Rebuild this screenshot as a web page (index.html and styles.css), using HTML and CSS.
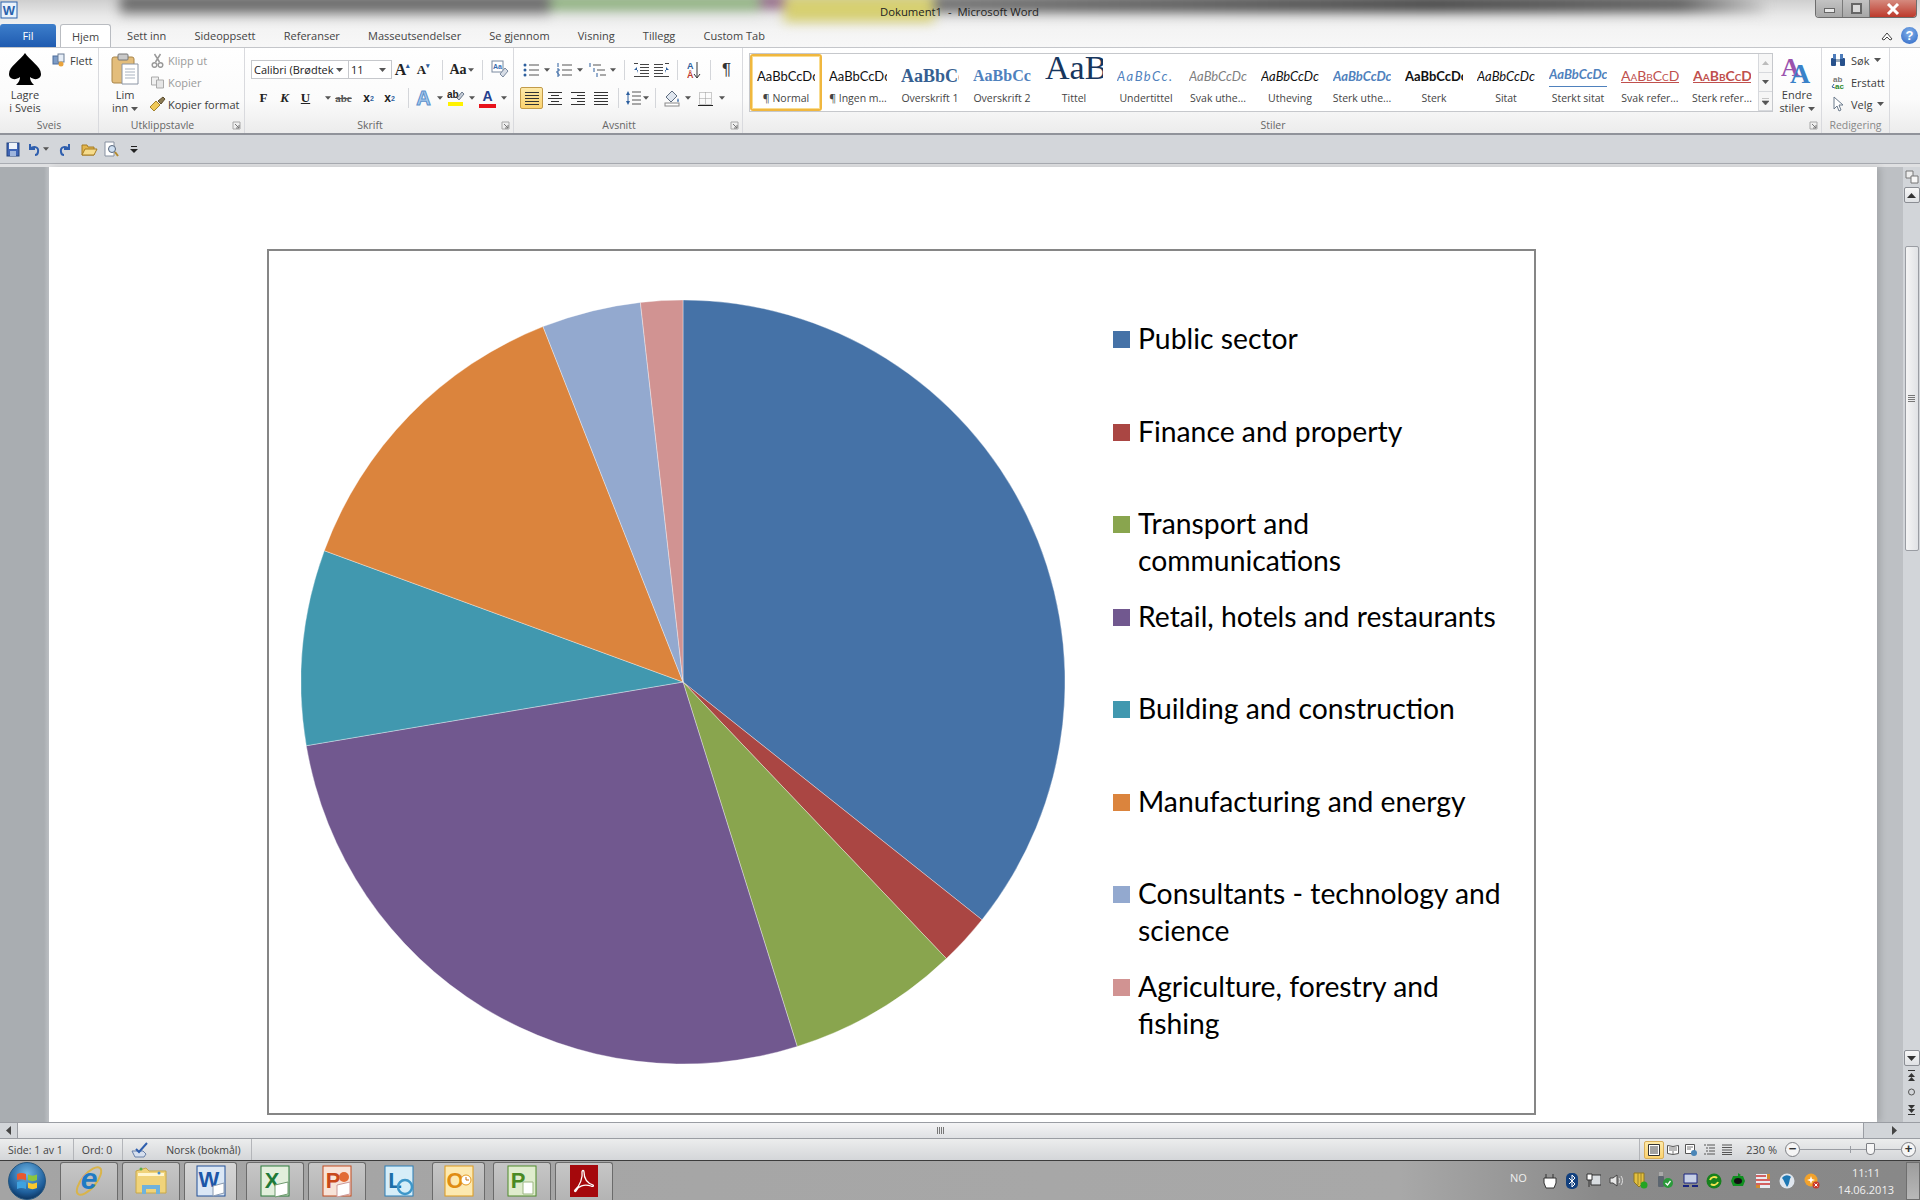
FILE: index.html
```html
<!DOCTYPE html>
<html lang="nb">
  <head>
    <meta charset="UTF-8" />
    <title>Dokument1 - Microsoft Word</title>
    <link rel="stylesheet" href="styles.css">
  </head>
  <body>
    <svg class="defs" width="0" height="0">
      <symbol id="arrow" viewBox="0 0 7 4"><path d="M0 0h7L3.500 4z" fill="#555"/></symbol>
      <symbol id="launcher" viewBox="0 0 9 9"><path d="M1 1h7v7H1z" fill="none" stroke="#a8a8a8"/><path d="M3 3l4 4M7 4v3H4" fill="none" stroke="#777"/></symbol>
      <symbol id="lines" viewBox="0 0 16 14"><path d="M1 1.500h14M1 4.500h14M1 7.500h14M1 10.500h14M1 13.500h14" stroke="#333" fill="none"/></symbol>
    </svg>

    <!-- title bar and tabs -->
    <header class="top">
      <div class="blur">
        <span class="blur-dark"></span>
        <span class="blur-green"></span>
        <span class="blur-purple"></span>
        <span class="blur-yellow"></span>
        <span class="blur-dark2"></span>
      </div>
      <div class="titlebar">
        <svg class="app-icon" width="18" height="18" viewBox="0 0 18 18">
          <rect x="1" y="1" width="16" height="16" fill="#eaf2fb" stroke="#2a62ad"/>
          <text x="9" y="14" text-anchor="middle" class="app-w">W</text>
        </svg>
        <span class="doc-title">Dokument1 &nbsp;-&nbsp; Microsoft Word</span>
        <div class="win-btns">
          <span class="win-btn"><i class="win-min"></i></span>
          <span class="win-btn"><i class="win-max"></i></span>
          <span class="win-btn win-close">
            <svg width="14" height="12" viewBox="0 0 14 12"><path d="M2 1l10 10M12 1L2 11" stroke="#fff" stroke-width="3"/></svg>
          </span>
        </div>
      </div>
      <nav class="tabs">
        <span class="tab-file">Fil</span>
        <span class="tab tab-on">Hjem</span>
        <span class="tab">Sett inn</span>
        <span class="tab">Sideoppsett</span>
        <span class="tab">Referanser</span>
        <span class="tab">Masseutsendelser</span>
        <span class="tab">Se gjennom</span>
        <span class="tab">Visning</span>
        <span class="tab">Tillegg</span>
        <span class="tab">Custom Tab</span>
        <span class="tab-right">
          <svg width="12" height="10" viewBox="0 0 12 10"><path d="M1 8l5-6 5 6-2 1-3-3-3 3z" fill="#fff" stroke="#444"/></svg>
          <span class="help">?</span>
        </span>
      </nav>
    </header>

    <!-- ribbon -->
    <section class="ribbon">
      <div class="group g-sveis">
        <div class="g-body sveis">
          <div class="big">
            <svg width="34" height="32" viewBox="0 0 34 32"><path d="M17 0C21 7 33 13 33 21c0 5-6 7-11 3 0 3 1 5 4 8H8c3-3 4-5 4-8-5 4-11 2-11-3C1 13 13 7 17 0z" fill="#000"/></svg>
            <span class="big-label">Lagre<br>i Sveis</span>
          </div>
          <div class="small-item flett">
            <svg width="13" height="14" viewBox="0 0 13 14"><rect x="1" y="3" width="6" height="8" fill="#7d9cc7" stroke="#4c6c9c"/><rect x="6" y="1" width="6" height="8" fill="#e6edf6" stroke="#6b7d95"/><circle cx="9" cy="11" r="2.500" fill="#e9a33c"/></svg>
            Flett
          </div>
        </div>
        <div class="g-label">Sveis</div>
      </div>

      <div class="group g-clip">
        <div class="g-body clip">
          <div class="big">
            <svg width="28" height="32" viewBox="0 0 28 32">
              <rect x="1" y="4" width="22" height="26" rx="2" fill="#e3bd7b" stroke="#a98549"/>
              <rect x="7" y="1" width="10" height="6" rx="1" fill="#c9c9c9" stroke="#777"/>
              <path d="M11 11h16v20H11z" fill="#fff" stroke="#8a94a3"/>
              <path d="M14 16h10M14 19h10M14 22h10M14 25h10" stroke="#a9b3c0"/>
            </svg>
            <span class="big-label">Lim<br>inn <svg class="ar-in" width="7" height="4"><use href="#arrow"/></svg></span>
          </div>
          <div class="clip-list">
            <div class="small-item off">
              <svg width="17" height="15" viewBox="0 0 14 15"><path d="M4 1l5 8M10 1L5 9" stroke="#9a9a9a" stroke-width="1.500"/><circle cx="4" cy="12" r="2.300" fill="none" stroke="#9a9a9a" stroke-width="1.500"/><circle cx="10" cy="12" r="2.300" fill="none" stroke="#9a9a9a" stroke-width="1.500"/></svg>
              Klipp ut
            </div>
            <div class="small-item off">
              <svg width="17" height="13" viewBox="0 0 14 13"><path d="M1 1h7v8H1z" fill="#f0f0f0" stroke="#aaa"/><path d="M6 4h7v8H6z" fill="#e6e6e6" stroke="#aaa"/></svg>
              Kopier
            </div>
            <div class="small-item">
              <svg width="17" height="16" viewBox="0 0 17 16"><path d="M1 11l6-6 4 4-6 6z" fill="#efc95a" stroke="#a5842c"/><path d="M9 5l5-4 2 2-4 5z" fill="#8c7b54" stroke="#5c4d2f"/></svg>
              Kopier format
            </div>
          </div>
        </div>
        <div class="g-label g-label-launch">Utklippstavle<svg class="launch" width="9" height="9"><use href="#launcher"/></svg></div>
      </div>

      <div class="group g-font">
        <div class="g-body rows">
          <div class="row">
            <span class="sel sel-font">Calibri (Brødtek<svg width="7" height="4"><use href="#arrow"/></svg></span>
            <span class="sel sel-size">11<svg width="7" height="4"><use href="#arrow"/></svg></span>
            <span class="t t-grow">A<sup>▴</sup></span>
            <span class="t t-shrink">A<sup>▾</sup></span>
            <span class="sep sep-8"></span>
            <span class="t t-case">Aa</span><span class="ar ar-back"><svg width="6" height="4"><use href="#arrow"/></svg></span>
            <span class="sep sep-7"></span>
            <span class="t">
              <svg width="18" height="19" viewBox="0 0 18 19"><rect x="1" y="1" width="11" height="11" fill="#fff" stroke="#7b8aa0"/><text x="6.500" y="9" class="mini-a">Aa</text><path d="M9 14l5-6 3 3-5 6z" fill="#d7dde6" stroke="#7b8aa0"/></svg>
            </span>
          </div>
          <div class="row row-shift">
            <span class="t t-b">F</span>
            <span class="t t-i">K</span>
            <span class="t t-u">U</span><span class="ar ar-wide"><svg width="6" height="4"><use href="#arrow"/></svg></span>
            <span class="t t-s">abc</span>
            <span class="t t-sub sp4">x<sub>2</sub></span>
            <span class="t t-sub">x<sup>2</sup></span>
            <span class="sep sep-8"></span>
            <span class="t t-effect">A</span><span class="ar"><svg width="6" height="4"><use href="#arrow"/></svg></span>
            <span class="t">
              <svg width="18" height="18" viewBox="0 0 18 18"><text x="0" y="9" class="mini-ab">ab</text><path d="M10 9l5-6 2 2-5 6z" fill="#c5cdd8" stroke="#6d7a8c"/><rect x="1" y="13" width="15" height="4" fill="#fff200"/></svg>
            </span><span class="ar"><svg width="6" height="4"><use href="#arrow"/></svg></span>
            <span class="t t-color">A<i></i></span><span class="ar"><svg width="6" height="4"><use href="#arrow"/></svg></span>
          </div>
        </div>
        <div class="g-label g-label-launch">Skrift<svg class="launch" width="9" height="9"><use href="#launcher"/></svg></div>
      </div>

      <div class="group g-para">
        <div class="g-body rows">
          <div class="row para-top">
            <span class="t">
              <svg width="16" height="14" viewBox="0 0 16 14"><path d="M6 2h10M6 7h10M6 12h10" stroke="#555"/><circle cx="2" cy="2" r="1.500" fill="#2d5f9e"/><circle cx="2" cy="7" r="1.500" fill="#2d5f9e"/><circle cx="2" cy="12" r="1.500" fill="#2d5f9e"/></svg>
            </span><span class="ar ar-s"><svg width="6" height="4"><use href="#arrow"/></svg></span>
            <span class="t">
              <svg width="16" height="14" viewBox="0 0 16 14"><path d="M6 2h10M6 7h10M6 12h10" stroke="#555"/><path d="M2 0v4M1 6h2v2H1v2h2M1 11h2v2H1" stroke="#2d5f9e" fill="none"/></svg>
            </span><span class="ar ar-s"><svg width="6" height="4"><use href="#arrow"/></svg></span>
            <span class="t">
              <svg width="18" height="14" viewBox="0 0 18 14"><path d="M5 2h8M9 7h8M12 12h6" stroke="#555"/><path d="M2 0v4M6 5v4M9 10v4" stroke="#2d5f9e"/></svg>
            </span><span class="ar ar-s"><svg width="6" height="4"><use href="#arrow"/></svg></span>
            <span class="sep sep-5"></span>
            <span class="t">
              <svg width="16" height="14" viewBox="0 0 16 14"><path d="M7 1.500h9M7 4.500h9M7 7.500h9M7 10.500h9M1 13.500h15M1 .5h4" stroke="#444"/><path d="M5 7H1l3-3v6z" fill="#2d5f9e"/></svg>
            </span>
            <span class="t">
              <svg width="16" height="14" viewBox="0 0 16 14"><path d="M0 1.500h9M0 4.500h9M0 7.500h9M0 10.500h9M0 13.500h15M11 .5h4" stroke="#444"/><path d="M11 7h4l-3-3v6z" fill="#2d5f9e"/></svg>
            </span>
            <span class="sep sep-5"></span>
            <span class="t">
              <svg width="14" height="18" viewBox="0 0 14 18"><text x="0" y="8" class="mini-sort a">A</text><text x="0" y="17" class="mini-sort z">Å</text><path d="M10 1v15M7 13l3 4 3-4" fill="none" stroke="#333"/></svg>
            </span>
            <span class="sep sep-6"></span>
            <span class="t t-pil">¶</span>
          </div>
          <div class="row">
            <span class="t t-active">
              <svg width="16" height="14"><use href="#lines"/></svg>
            </span>
            <span class="t t-narrow"><svg width="16" height="14" viewBox="0 0 16 14"><path d="M1 1.500h14M4 4.500h8M1 7.500h14M4 10.500h8M1 13.500h14" stroke="#333"/></svg></span>
            <span class="t t-narrow"><svg width="16" height="14" viewBox="0 0 16 14"><path d="M1 1.500h14M7 4.500h8M1 7.500h14M7 10.500h8M1 13.500h14" stroke="#333"/></svg></span>
            <span class="t t-narrow"><svg width="16" height="14"><use href="#lines"/></svg></span>
            <span class="sep sep-6"></span>
            <span class="t t-spacing">
              <svg width="16" height="16" viewBox="0 0 16 16"><path d="M7 2h9M7 6h9M7 10h9M7 14h9" stroke="#555"/><path d="M3 1L1 5h4zM3 15l-2-4h4z" fill="#2d5f9e"/><path d="M3 4v8" stroke="#2d5f9e"/></svg>
            </span><span class="ar ar-n"><svg width="6" height="4"><use href="#arrow"/></svg></span>
            <span class="sep sep-5"></span>
            <span class="t">
              <svg width="16" height="18" viewBox="0 0 16 18"><path d="M2 8l6-6 5 5-6 6z" fill="#dfe6ef" stroke="#5f6d80"/><path d="M14 9c1 2 1 4 0 4s-1-2 0-4z" fill="#2d5f9e"/><rect x="1" y="14" width="14" height="3" fill="#fff" stroke="#888"/></svg>
            </span><span class="ar"><svg width="6" height="4"><use href="#arrow"/></svg></span>
            <span class="t sp2">
              <svg width="15" height="15" viewBox="0 0 15 15"><path d="M1.500 1.500h12v12h-12zM7.500 1.500v12M1.500 7.500h12" fill="none" stroke="#999" stroke-dasharray="1 1"/><path d="M0 14.500h15" stroke="#222"/></svg>
            </span><span class="ar"><svg width="6" height="4"><use href="#arrow"/></svg></span>
          </div>
        </div>
        <div class="g-label g-label-launch">Avsnitt<svg class="launch" width="9" height="9"><use href="#launcher"/></svg></div>
      </div>

      <div class="group g-styles">
        <div class="g-body styles-body">
          <div class="gallery">
            <div class="style style-on"><span class="pv">AaBbCcDc</span><span class="st-name">¶ Normal</span></div>
            <div class="style"><span class="pv">AaBbCcDc</span><span class="st-name">¶ Ingen m...</span></div>
            <div class="style"><span class="pv pv-h1">AaBbCc</span><span class="st-name">Overskrift 1</span></div>
            <div class="style"><span class="pv pv-h2">AaBbCc</span><span class="st-name">Overskrift 2</span></div>
            <div class="style"><span class="pv pv-title">AaB</span><span class="st-name">Tittel</span></div>
            <div class="style"><span class="pv pv-sub">AaBbCc.</span><span class="st-name">Undertittel</span></div>
            <div class="style"><span class="pv pv-weak">AaBbCcDc</span><span class="st-name">Svak uthe...</span></div>
            <div class="style"><span class="pv pv-em">AaBbCcDc</span><span class="st-name">Utheving</span></div>
            <div class="style"><span class="pv pv-strongem">AaBbCcDc</span><span class="st-name">Sterk uthe...</span></div>
            <div class="style"><span class="pv pv-strong">AaBbCcDc</span><span class="st-name">Sterk</span></div>
            <div class="style"><span class="pv pv-em">AaBbCcDc</span><span class="st-name">Sitat</span></div>
            <div class="style"><span class="pv pv-quote">AaBbCcDc</span><span class="st-name">Sterkt sitat</span></div>
            <div class="style"><span class="pv pv-ref">AaBbCcDd</span><span class="st-name">Svak refer...</span></div>
            <div class="style"><span class="pv pv-ref pv-refb">AaBbCcDd</span><span class="st-name">Sterk refer...</span></div>
            <div class="gal-scroll">
              <span><svg width="7" height="4"><path d="M0 4h7L3.500 0z" fill="#bbb"/></svg></span>
              <span><svg width="7" height="4"><use href="#arrow"/></svg></span>
              <span><svg width="7" height="7" viewBox="0 0 7 7"><path d="M0 0h7M0 3h7L3.500 7z" fill="#555" stroke="#555" stroke-width=".6"/></svg></span>
            </div>
          </div>
          <div class="big change">
            <svg width="32" height="32" viewBox="0 0 32 32">
              <text x="0" y="23" class="aa-purple">A</text>
              <text x="9" y="30" class="aa-blue">A</text>
            </svg>
            <span class="big-label">Endre<br>stiler <svg class="ar-in" width="7" height="4"><use href="#arrow"/></svg></span>
          </div>
        </div>
        <div class="g-label g-label-launch">Stiler<svg class="launch" width="9" height="9"><use href="#launcher"/></svg></div>
      </div>

      <div class="group g-edit">
        <div class="g-body edit">
          <div class="small-item">
            <svg width="16" height="14" viewBox="0 0 16 14"><rect x="1" y="5" width="5" height="8" rx="1" fill="#27518c"/><rect x="10" y="5" width="5" height="8" rx="1" fill="#27518c"/><path d="M3 1h3v5H3zM10 1h3v5h-3z" fill="#4d7cbb"/><path d="M6 6h4v3H6z" fill="#9ab"/></svg>
            Søk <svg class="ar-in" width="7" height="4"><use href="#arrow"/></svg>
          </div>
          <div class="small-item">
            <svg width="16" height="15" viewBox="0 0 16 15"><text x="3" y="7" class="mini-rep">ab</text><text x="5" y="14" class="mini-rep2">ac</text><path d="M4 9l-2 3 3 1" fill="none" stroke="#345f9c"/></svg>
            Erstatt
          </div>
          <div class="small-item">
            <svg width="16" height="16" viewBox="0 0 16 16"><path d="M4 1v12l3-3 2 5 2-1-2-5h4z" fill="#fff" stroke="#6b7a8c"/></svg>
            Velg <svg class="ar-in" width="7" height="4"><use href="#arrow"/></svg>
          </div>
        </div>
        <div class="g-label g-label-off">Redigering</div>
      </div>
    </section>

    <!-- quick access -->
    <div class="qat">
      <svg width="14" height="15" viewBox="0 0 14 15"><rect x="1" y="1" width="12" height="13" fill="#3f65b5" stroke="#23437f"/><rect x="3" y="1" width="8" height="6" fill="#eef3fa"/><rect x="4" y="9" width="6" height="5" fill="#9fb5dc"/></svg>
      <svg class="q-undo" width="15" height="15" viewBox="0 0 15 15"><path d="M4 2v5h5M4 7c3-3 9-3 8 3-.3 2-2 3-3 3" fill="none" stroke="#2f5fae" stroke-width="2"/></svg>
      <svg class="q-ar" width="6" height="4"><use href="#arrow"/></svg>
      <svg class="q-redo" width="15" height="15" viewBox="0 0 15 15"><path d="M11 2v5H6M11 7C8 4 2 4 3 10c.3 2 2 3 3 3" fill="none" stroke="#2f5fae" stroke-width="2"/></svg>
      <svg class="q-open" width="17" height="15" viewBox="0 0 17 15"><path d="M1 3h5l1 2h6v8H1z" fill="#e3b64e" stroke="#a67c23"/><path d="M1 13l3-6h12l-3 6z" fill="#f6dc8c" stroke="#a67c23"/></svg>
      <svg class="q-prev" width="15" height="16" viewBox="0 0 15 16"><path d="M1 1h9v14H1z" fill="#fff" stroke="#8791a0"/><circle cx="8" cy="8" r="3.500" fill="#cfe0f2" stroke="#56657a"/><path d="M11 11l3 4" stroke="#b48a2e" stroke-width="2"/></svg>
      <svg class="q-drop" width="8" height="7" viewBox="0 0 8 7"><path d="M1 .5h6" stroke="#222"/><path d="M0 3h8L4 7z" fill="#222"/></svg>
    </div>

    <!-- document -->
    <main class="workspace">
      <div class="page">
        <div class="chart">
          <svg class="pie" width="764" height="764" viewBox="-382 -382 764 764">
            <path class="s" fill="#4572a7" d="M0 0V-382A382 382 0 0 1 299 237.800Z"/>
            <path class="s" fill="#aa4643" d="M0 0L299 237.800A382 382 0 0 1 263.400 276.600Z"/>
            <path class="s" fill="#89a54e" d="M0 0L263.400 276.600A382 382 0 0 1 114.200 364.500Z"/>
            <path class="s" fill="#71588f" d="M0 0L114.200 364.500A382 382 0 0 1 -376.700 63.700Z"/>
            <path class="s" fill="#4198af" d="M0 0L-376.700 63.700A382 382 0 0 1 -358.700 -131.300Z"/>
            <path class="s" fill="#db843d" d="M0 0L-358.700 -131.300A382 382 0 0 1 -140 -355.400Z"/>
            <path class="s" fill="#93a9cf" d="M0 0L-140 -355.400A382 382 0 0 1 -42.600 -379.600Z"/>
            <path class="s" fill="#d19392" d="M0 0L-42.600 -379.600A382 382 0 0 1 0 -382Z"/>
          </svg>
          <ul class="legend">
            <li><i class="c1"></i><span>Public sector</span></li>
            <li><i class="c2"></i><span>Finance and property</span></li>
            <li><i class="c3"></i><span>Transport and communications</span></li>
            <li><i class="c4"></i><span>Retail, hotels and restaurants</span></li>
            <li><i class="c5"></i><span>Building and construction</span></li>
            <li><i class="c6"></i><span>Manufacturing and energy</span></li>
            <li><i class="c7"></i><span>Consultants - technology and science</span></li>
            <li><i class="c8"></i><span>Agriculture, forestry and fishing</span></li>
          </ul>
        </div>
      </div>
      <aside class="vscroll">
        <svg class="ruler-ic" width="14" height="14" viewBox="0 0 14 14"><path d="M1 1h7v7H1z" fill="#eee" stroke="#777"/><path d="M6 6h7v7H6z" fill="#f7f7f7" stroke="#777"/></svg>
        <span class="sb-btn"><svg width="9" height="5"><path d="M0 5h9L4.500 0z" fill="#333"/></svg></span>
        <span class="thumb"><i></i></span>
        <span class="sb-btn sb-down"><svg width="9" height="5"><path d="M0 0h9L4.500 5z" fill="#333"/></svg></span>
        <svg class="browse" width="9" height="46" viewBox="0 0 9 46"><path d="M1 1h7M1 7l3.500-4L8 7zM1 11l3.500-4L8 11z" fill="#333" stroke="none"/><path d="M1 .5h7" stroke="#333"/><circle cx="4.500" cy="22" r="3" fill="none" stroke="#555"/><path d="M1 35l3.500 4L8 35zM1 39l3.500 4L8 39z" fill="#333"/><path d="M1 44.500h7" stroke="#333"/></svg>
      </aside>
    </main>

    <div class="hscroll">
      <svg width="5" height="9"><path d="M5 0v9L0 4.500z" fill="#444"/></svg>
      <span class="h-track"><i></i></span>
      <svg width="5" height="9"><path d="M0 0v9L5 4.500z" fill="#444"/></svg>
    </div>

    <footer class="status">
      <span class="st-cell">Side: 1 av 1</span>
      <span class="st-cell">Ord: 0</span>
      <span class="st-cell st-lang">
        <svg width="18" height="16" viewBox="0 0 18 16"><path d="M1 9h11l3 3-2 3H4z" fill="#d6dfee" stroke="#6880a8"/><path d="M5 7l3 3 8-9" fill="none" stroke="#2f5fae" stroke-width="2"/></svg>
        Norsk (bokmål)
      </span>
      <div class="views">
        <span class="view view-on"><svg width="12" height="12" viewBox="0 0 12 12"><path d="M.5.5h11v11H.5z" fill="#fff" stroke="#333"/><path d="M2 3h8M2 5h8M2 7h8M2 9h8" stroke="#444"/></svg></span>
        <span class="view"><svg width="12" height="11" viewBox="0 0 12 11"><path d="M.5 1.500L6 2.500l5.500-1v8L6 10.500.5 9.500z" fill="#fff" stroke="#555"/><path d="M6 2.500v8M2 4h3M2 6h3M7 4h3M7 6h3" stroke="#777"/></svg></span>
        <span class="view"><svg width="12" height="12" viewBox="0 0 12 12"><path d="M.5.5h9v9h-9z" fill="#fff" stroke="#555"/><path d="M2 3h6M2 5h4" stroke="#777"/><circle cx="9" cy="9" r="3" fill="#4a86b8"/></svg></span>
        <span class="view"><svg width="12" height="11" viewBox="0 0 12 11"><path d="M1 1h2M4 1h8M3 4h2M6 4h6M3 7h2M6 7h6M1 10h2M4 10h8" stroke="#555"/></svg></span>
        <span class="view"><svg width="12" height="11" viewBox="0 0 12 11"><path d="M1 1h10M1 3.500h10M1 6h10M1 8.500h10M1 10.500h10" stroke="#555"/></svg></span>
      </div>
      <span class="zoom-val">230 %</span>
      <span class="zoom-btn">−</span>
      <span class="slider"><i class="mid"></i><i class="knob"></i></span>
      <span class="zoom-btn">+</span>
    </footer>

    <!-- windows taskbar -->
    <div class="taskbar">
      <span class="orb">
        <svg width="22" height="20" viewBox="0 0 22 20">
          <path d="M1 3c3-1.500 6-1.500 9 0v6.500C7 8 4 8 1 9z" fill="#e8582e"/>
          <path d="M12 3.500c3 1.500 6 1.500 9 0V9c-3 1.500-6 1.500-9 0z" fill="#8cc63f"/>
          <path d="M1 11c3-1 6-1 9 .5V18c-3-1.500-6-1.500-9 0z" fill="#3fa2e0"/>
          <path d="M12 11.500c3 1.500 6 1.500 9 0V17c-3 1.500-6 1.500-9 0z" fill="#f9c82f"/>
        </svg>
      </span>
      <span class="task">
        <svg width="34" height="36" viewBox="0 0 34 36"><ellipse cx="17" cy="18" rx="17" ry="7" transform="rotate(-50 17 18)" fill="none" stroke="#d9b44a" stroke-width="2"/><text x="17" y="26" text-anchor="middle" class="ie-e">e</text></svg>
      </span>
      <span class="task">
        <svg width="32" height="30" viewBox="0 0 32 30"><path d="M1 5l10-3 3 3h17v22H1z" fill="#f0d37a" stroke="#c8a848"/><path d="M3 7h26v3H3z" fill="#fff6cf"/><circle cx="6" cy="3" r="1.500" fill="#5bb04a"/><circle cx="24" cy="7" r="1.500" fill="#4a90d0"/><path d="M7 19h18v9h-4v-5H11v5H7z" fill="#6fb2dc"/></svg>
      </span>
      <span class="task task-word">
        <svg width="30" height="34" viewBox="0 0 30 34"><rect x="1" y="2" width="28" height="30" fill="#dbe7f5" stroke="#204f96"/><text x="13" y="23" text-anchor="middle" class="ic-l w">W</text><path d="M17 22l11-3v10l-11 3z" fill="#fff" stroke="#8a9ab0"/></svg>
      </span>
      <span class="task task-gap">
        <svg width="30" height="34" viewBox="0 0 30 34"><rect x="1" y="2" width="28" height="30" fill="#e2efdc" stroke="#2b7a3b"/><text x="12" y="24" text-anchor="middle" class="ic-l x">X</text><path d="M15 21l13-3v12l-13 3z" fill="#fff" stroke="#6f9a6f"/></svg>
      </span>
      <span class="task">
        <svg width="30" height="34" viewBox="0 0 30 34"><rect x="1" y="2" width="28" height="30" fill="#f8e3d8" stroke="#c24a1e"/><text x="11" y="24" text-anchor="middle" class="ic-l p">P</text><circle cx="22" cy="13" r="5" fill="#e26b35"/><path d="M15 21l13-3v12l-13 3z" fill="#fff" stroke="#c99"/></svg>
      </span>
      <span class="task task-plain">
        <svg width="30" height="34" viewBox="0 0 30 34"><rect x="1" y="2" width="28" height="30" fill="#d6eef8" stroke="#2b7fb8"/><text x="11" y="24" text-anchor="middle" class="ic-l l">L</text><circle cx="21" cy="23" r="7" fill="none" stroke="#3e97c9" stroke-width="2.500"/></svg>
      </span>
      <span class="task task-o">
        <svg width="30" height="34" viewBox="0 0 30 34"><rect x="1" y="2" width="28" height="30" fill="#fde9b0" stroke="#dd9a1c"/><text x="11" y="24" text-anchor="middle" class="ic-l o">O</text><circle cx="22" cy="16" r="5" fill="#fff" stroke="#e69a1e"/><path d="M22 13v3h3" fill="none" stroke="#c56e10"/></svg>
      </span>
      <span class="task task-gap">
        <svg width="30" height="34" viewBox="0 0 30 34"><rect x="1" y="2" width="28" height="30" fill="#dfeccd" stroke="#4f8a2a"/><text x="11" y="24" text-anchor="middle" class="ic-l pr">P</text><path d="M16 18h10v12H16z" fill="#fff" stroke="#9cb781"/></svg>
      </span>
      <span class="task">
        <svg width="28" height="32" viewBox="0 0 28 32"><rect width="28" height="32" fill="#a5080c"/><path d="M5 25c5-4 8-13 7-18 0-2 2-2 2 0 0 7 3 11 9 13 1 1 0 2-2 1-7-2-13 0-15 5-1 1-2 0-1-1z" fill="none" stroke="#fff" stroke-width="1.300"/></svg>
      </span>

      <div class="tray">
        <span class="lang">NO</span>
        <svg width="14" height="16" viewBox="0 0 14 16"><path d="M3 1v4M10 1v4M1 5h12v5l-2 5H3l-2-5z" fill="#fff" stroke="#333"/></svg>
        <svg width="12" height="16" viewBox="0 0 12 16"><rect width="12" height="16" rx="5" fill="#12407e"/><path d="M3 5l6 6-3 3V2l3 3-6 6" fill="none" stroke="#fff"/></svg>
        <svg width="15" height="15" viewBox="0 0 15 15"><path d="M5 2h10v10H5z" fill="#d8dce0" stroke="#333"/><path d="M1 1h5v6H1zM3 7v7" fill="#fff" stroke="#333"/></svg>
        <svg width="15" height="13" viewBox="0 0 15 13"><path d="M1 4h3l4-3v11L4 9H1z" fill="#e8e8e8" stroke="#444"/><path d="M10 4c1 1 1 4 0 5M12 2c2 2 2 7 0 9" fill="none" stroke="#ddd"/></svg>
        <svg width="15" height="17" viewBox="0 0 15 17"><path d="M1 1h10v9l-5 5-5-5z" fill="#e3c040" stroke="#8f7620"/><path d="M5 1v12M8 1v11" stroke="#9b8228"/><circle cx="11" cy="13" r="3.500" fill="#23a423"/></svg>
        <svg width="18" height="17" viewBox="0 0 18 17"><rect x="2" y="4" width="6" height="11" rx="1" fill="#5c6670"/><path d="M3 0h4v4H3z" fill="#aaa"/><circle cx="12" cy="11" r="5" fill="#2a9a3a"/><path d="M9.500 11l2 2 3-4" fill="none" stroke="#fff" stroke-width="1.300"/></svg>
        <svg width="15" height="15" viewBox="0 0 15 15"><path d="M1 1h13v9H1z" fill="#c7d0e6" stroke="#1a2580"/><path d="M0 13h6M9 13h6" stroke="#1a2580" stroke-width="2"/></svg>
        <svg width="16" height="16" viewBox="0 0 16 16"><circle cx="8" cy="8" r="7.500" fill="#17811d"/><path d="M4 7c1-3 5-4 7-2M12 9c-1 3-5 4-7 2" fill="none" stroke="#f1e34e" stroke-width="2"/></svg>
        <svg width="16" height="16" viewBox="0 0 16 16"><path d="M3 3h10l2 5-2 5H3L1 8z" fill="#0f8f20"/><ellipse cx="8" cy="8" rx="4" ry="3" fill="#111"/><path d="M8 0v4l3-2z" fill="#0f8f20"/></svg>
        <svg width="16" height="16" viewBox="0 0 16 16"><path d="M1 1h14v14H1z" fill="#e8ecf2"/><path d="M1 3h10M1 7h14M1 11h14" stroke="#c33" stroke-width="1.500"/><path d="M12 1h3v5h-3zM1 12h4v3H1z" fill="#d28a2f"/></svg>
        <svg width="16" height="16" viewBox="0 0 16 16"><circle cx="8" cy="8" r="7.500" fill="#dfe6ee"/><path d="M3 5c3-4 7-3 9-1-2 2-1 7-4 10-2-3-3-7-5-9z" fill="#1e78b4"/></svg>
        <svg width="16" height="16" viewBox="0 0 16 16"><circle cx="7" cy="7" r="6.500" fill="#f2a22c"/><path d="M7 3l1 3 3 1-3 1-1 3-1-3-3-1 3-1z" fill="#fff"/><circle cx="12" cy="12" r="3.500" fill="#c8382b"/><path d="M10.500 10.500l3 3M13.500 10.500l-3 3" stroke="#fff"/></svg>
        <span class="clock">11:11<br>14.06.2013</span>
      </div>
      <span class="show-desk"></span>
    </div>
  </body>
</html>
```

FILE: styles.css
```css
* {
  margin: 0;
  padding: 0;
  box-sizing: border-box;
}

html,
body {
  width: 1920px;
  height: 1200px;
  overflow: hidden;
}

body {
  display: flex;
  flex-direction: column;
  background-color: #a9acb0;
  font-family: "Open Sans", "Noto Sans", sans-serif;
  font-size: 11px;
  color: #3d3d3d;
}

.defs {
  position: absolute;
}

svg {
  flex: none;
  display: block;
}

/* top */
.top {
  position: relative;
  height: 47px;
  background: linear-gradient(#cfcfcf 0, #e9e9e9 16px, #f4f4f4 30px, #f7f7f7 47px);
  overflow: hidden;
}

.blur {
  position: absolute;
  inset: 0;
  filter: blur(6px);
}

.blur span {
  position: absolute;
  top: -4px;
}

.blur-dark {
  left: 120px;
  width: 430px;
  height: 18px;
  background: linear-gradient(#4a4a4a, #8d8d8d);
}

.blur-green {
  left: 550px;
  width: 210px;
  height: 14px;
  background: #8db27d;
}

.blur-purple {
  left: 760px;
  width: 24px;
  height: 12px;
  background: #8d5e80;
}

.blur-yellow {
  left: 784px;
  width: 150px;
  height: 26px;
  background: #d6cf70;
}

.blur-dark2 {
  left: 934px;
  width: 830px;
  height: 16px;
  background: linear-gradient(90deg, #6e6e6e, #3f3f3f 60%, #5a5a5a 90%, #c9c9c9);
}

.titlebar {
  position: relative;
  height: 24px;
  display: flex;
  align-items: flex-start;
}

.app-icon {
  margin: 1px 0 0 0;
}

.app-w {
  font-family: "Liberation Sans", sans-serif;
  font-weight: 700;
  font-size: 13px;
  fill: #2a62ad;
}

.doc-title {
  position: absolute;
  left: 880px;
  top: 3px;
  font-size: 11.300px;
  line-height: 18px;
  color: #222;
  white-space: nowrap;
}

.win-btns {
  position: absolute;
  right: 3px;
  top: 0;
  width: 102px;
  height: 18px;
  display: flex;
  border: 1px solid #6d6d6d;
  border-top: none;
  border-radius: 0 0 4px 4px;
  overflow: hidden;
}

.win-btn {
  flex: 1;
  display: flex;
  align-items: center;
  justify-content: center;
  background: linear-gradient(#c3c3c3, #a7a7a7);
  border-right: 1px solid #7a7a7a;
}

.win-close {
  flex: 0 0 46px;
  border-right: none;
  background: linear-gradient(#d58a7e, #bd3a2c);
}

.win-min {
  width: 11px;
  height: 5px;
  margin-top: 3px;
  background: #e8e8e8;
  border: 1px solid #666;
}

.win-max {
  width: 11px;
  height: 11px;
  background: #d9d9d9;
  border: 2px solid #666;
}

.tabs {
  position: relative;
  height: 23px;
  display: flex;
  align-items: stretch;
  font-size: 11px;
  line-height: 23px;
  color: #444;
}

.tab-file {
  width: 56px;
  margin-right: 4px;
  text-align: center;
  color: #fff;
  background: linear-gradient(#3d7ecb, #1f5bb0);
  border-radius: 3px 3px 0 0;
}

.tab {
  padding: 0 14.100px;
  white-space: nowrap;
}

.tab-on {
  width: 51px;
  padding: 0;
  text-align: center;
  background: #fff;
  border: 1px solid #b9bcc1;
  border-bottom: none;
  border-radius: 3px 3px 0 0;
  margin-right: 2px;
}

.tab-right {
  margin-left: auto;
  display: flex;
  align-items: center;
  gap: 8px;
  padding-right: 2px;
}

.help {
  width: 17px;
  height: 17px;
  border-radius: 50%;
  background: radial-gradient(circle at 50% 35%, #83b2ea, #2c65c4);
  color: #fff;
  font: 700 13px/17px "Liberation Sans", sans-serif;
  text-align: center;
}

/* ribbon */
.ribbon {
  height: 88px;
  display: flex;
  background: linear-gradient(#fff 0, #fbfbfb 60%, #ececec 100%);
  border-top: 1px solid #c4c6ca;
  border-bottom: 2px solid #90939a;
}

.group {
  height: 100%;
  display: flex;
  flex-direction: column;
  position: relative;
  border-right: 1px solid #d9dade;
}

.g-sveis {
  width: 99px;
}

.g-clip {
  width: 146px;
}

.g-font {
  width: 269px;
}

.g-para {
  width: 229px;
}

.g-styles {
  width: 1079px;
}

.g-edit {
  width: 68px;
}

.g-body {
  flex: 1;
  min-height: 0;
}

.g-label {
  position: relative;
  height: 15px;
  line-height: 15px;
  text-align: center;
  color: #666;
  font-size: 10.500px;
}

.g-label-launch {
  padding-right: 18px;
}

.g-label-off {
  color: #888;
}

.launch {
  position: absolute;
  right: 3px;
  top: 3px;
}

.big {
  display: flex;
  flex-direction: column;
  align-items: center;
  text-align: center;
}

.big-label {
  margin-top: 3px;
  line-height: 13px;
  white-space: nowrap;
}

.ar-in {
  display: inline-block;
  vertical-align: middle;
}

.small-item {
  display: flex;
  align-items: center;
  gap: 5px;
  height: 22px;
  white-space: nowrap;
}

.off {
  color: #9a9a9a;
}

.sveis {
  display: flex;
  padding: 5px 0 0 8px;
}

.sveis .big {
  width: 34px;
}

.flett {
  margin: -4px 0 0 10px;
}

.clip {
  display: flex;
  padding: 5px 0 0 12px;
}

.clip .big {
  width: 28px;
}

.clip-list {
  margin: -4px 0 0 10px;
}

.clip-list .small-item {
  gap: 2px;
}

/* font and paragraph rows */
.rows {
  padding: 12px 0 0 6px;
}

.row {
  display: flex;
  align-items: center;
  height: 19px;
}

.row + .row {
  margin-top: 8px;
  height: 22px;
}

.row-shift {
  padding-left: 2px;
}

.sel {
  flex: none;
  height: 19px;
  display: flex;
  align-items: center;
  justify-content: space-between;
  padding: 0 5px 0 2px;
  border: 1px solid #c6c8cc;
  background: #fff;
  white-space: nowrap;
  color: #222;
}

.sel-font {
  width: 98px;
}

.sel-size {
  width: 43px;
  border-left: none;
}

.t {
  width: 21px;
  height: 21px;
  flex: none;
  display: flex;
  align-items: center;
  justify-content: center;
  font-family: "Liberation Serif", serif;
  color: #222;
  font-size: 13px;
  font-weight: 700;
}

.t sup {
  font-size: 7px;
  color: #2d5f9e;
  align-self: flex-start;
  margin-top: 3px;
}

.t-grow {
  font-size: 16px;
}

.t-shrink {
  font-size: 13px;
}

.t-case {
  width: 22px;
  font-size: 14px;
}

.t-b {
  font-size: 13px;
}

.t-i {
  font-style: italic;
}

.t-u {
  text-decoration: underline;
}

.t-s {
  text-decoration: line-through;
  font-size: 11px;
  color: #555;
}

.t-sub {
  font-family: "Liberation Sans", sans-serif;
  font-size: 12px;
}

.t-sub sub,
.t-sub sup {
  font-size: 7px;
  color: #2d5f9e;
  align-self: auto;
  margin: 0;
}

.t-effect {
  font: 700 20px "Liberation Sans", sans-serif;
  color: #a7cbee;
  -webkit-text-stroke: 1px #5d91cc;
}

.t-color {
  position: relative;
  font: 700 14px/14px "Liberation Sans", sans-serif;
  color: #24408e;
  padding-bottom: 5px;
}

.t-color i {
  position: absolute;
  left: 2px;
  right: 2px;
  bottom: 1px;
  height: 4px;
  background: #e8121a;
}

.t-pil {
  font: 400 17px "Liberation Sans", sans-serif;
  color: #333;
}

.t-active {
  width: 23px;
  height: 22px;
  border: 1px solid #c29b4a;
  border-radius: 2px;
  background: linear-gradient(#fde9a8, #fbd26f);
}

.t-narrow {
  width: 23px;
}

.t-spacing {
  width: 18px;
}

.ar {
  width: 11px;
  flex: none;
  display: flex;
  justify-content: center;
}

.ar-back {
  margin-left: -4px;
}

.ar-wide {
  width: 17px;
  justify-content: flex-end;
  padding-right: 2px;
}

.ar-s {
  width: 12px;
}

.ar-n {
  width: 8px;
}

.sp2 {
  margin-left: 2px;
}

.sp4 {
  margin-left: 4px;
}

.sep {
  width: 1px;
  height: 20px;
  flex: none;
  background: #d4d6da;
}

.sep-5 {
  margin: 0 5px;
}

.sep-6 {
  margin: 0 5px 0 6px;
}

.sep-7 {
  margin: 0 6px;
}

.sep-8 {
  margin: 0 4px 0 8px;
}

.mini-a {
  font: 700 7px "Liberation Sans", sans-serif;
  fill: #3a6cb0;
  text-anchor: middle;
}

.mini-ab {
  font: 700 10px "Liberation Sans", sans-serif;
  fill: #222;
}

.mini-sort {
  font: 700 9px "Liberation Sans", sans-serif;
}

.mini-sort.a {
  fill: #2d5f9e;
}

.mini-sort.z {
  fill: #c0392b;
}

.mini-rep {
  font: 700 8px "Liberation Sans", sans-serif;
  fill: #777;
}

.mini-rep2 {
  font: 700 8px "Liberation Sans", sans-serif;
  fill: #2b8a2b;
}

/* styles gallery */
.styles-body {
  display: flex;
  padding: 5px 0 0 6px;
}

.gallery {
  display: flex;
  width: 1024px;
  height: 59px;
  background: #fff;
  border: 1px solid #c6c8cc;
  position: relative;
}

.style {
  flex: none;
  width: 72px;
  height: 100%;
  display: flex;
  flex-direction: column;
  align-items: center;
  overflow: hidden;
  position: relative;
}

.style-on {
  border: 2px solid #f0b73f;
  border-radius: 3px;
  background: #fff;
  box-shadow: 0 0 0 1px #f9dc8f inset;
}

.style-on .pv {
  margin-top: 4px;
}

.style-on .st-name {
  top: 34px;
}

.pv {
  display: block;
  width: 58px;
  height: 32px;
  margin-top: 6px;
  overflow: hidden;
  white-space: nowrap;
  font-family: "Lato", sans-serif;
  font-size: 13px;
  line-height: 32px;
  color: #111;
}

.pv-h1 {
  font: 700 18px/32px "Liberation Serif", serif;
  color: #365f91;
}

.pv-h2 {
  font: 700 16px/32px "Liberation Serif", serif;
  color: #4f81bd;
}

.pv-title {
  height: 30px;
  margin-top: 2px;
  font: 400 34px/24px "Liberation Serif", serif;
  color: #17365d;
  text-align: center;
}

.pv-sub {
  font-style: italic;
  color: #4f81bd;
  letter-spacing: 1.500px;
}

.pv-weak {
  font-style: italic;
  color: #7f7f7f;
}

.pv-em {
  font-style: italic;
}

.pv-strongem {
  font-style: italic;
  font-weight: 700;
  color: #4f81bd;
}

.pv-strong {
  font-weight: 700;
}

.pv-quote {
  font-style: italic;
  font-weight: 700;
  color: #4f81bd;
  line-height: 28px;
  height: 27px;
  border-bottom: 1px solid #4f81bd;
  margin-bottom: 5px;
}

.pv-ref {
  font-size: 14px;
  font-variant: small-caps;
  color: #c0504d;
  text-decoration: underline;
}

.pv-refb {
  font-weight: 700;
}

.st-name {
  position: absolute;
  left: 0;
  right: 0;
  top: 36px;
  text-align: center;
  font-size: 10.500px;
  line-height: 16px;
  white-space: nowrap;
  color: #444;
}

.gal-scroll {
  position: absolute;
  right: 0;
  top: 0;
  bottom: 0;
  width: 14px;
  display: flex;
  flex-direction: column;
  border-left: 1px solid #d7d9dd;
  background: #f6f6f6;
}

.gal-scroll span {
  flex: 1;
  display: flex;
  align-items: center;
  justify-content: center;
  border-bottom: 1px solid #d7d9dd;
}

.change {
  width: 48px;
}

.aa-purple {
  font: 700 26px "Liberation Serif", serif;
  fill: #9a52ad;
}

.aa-blue {
  font: 700 28px "Liberation Serif", serif;
  fill: #3a82c9;
}

.edit {
  padding: 1px 0 0 8px;
}

/* quick access */
.qat {
  height: 29px;
  display: flex;
  align-items: center;
  padding: 0 0 0 6px;
  background: #d3d6da;
  border-bottom: 1px solid #a9acb2;
}

.q-undo {
  margin-left: 6px;
}

.q-ar {
  margin-left: 2px;
}

.q-redo {
  margin-left: 9px;
}

.q-open {
  margin-left: 8px;
}

.q-prev {
  margin-left: 6px;
}

.q-drop {
  margin-left: 11px;
}

/* document */
.workspace {
  flex: 1;
  min-height: 0;
  display: flex;
  border-top: 3px solid #dfe0e2;
  background: linear-gradient(90deg, #a9adb1, #a9adb1 44px, #bdc0c4 49px);
}

.page {
  width: 1828px;
  margin-left: 49px;
  padding: 82px 0 0 218px;
  background: #fff;
  overflow: hidden;
  box-shadow: 4px 0 6px rgba(0, 0, 0, 0.12);
}

.chart {
  width: 1269px;
  height: 866px;
  display: flex;
  padding: 49px 0 0 32px;
  border: 2px solid #868686;
  background: #fff;
}

.pie .s {
  stroke: #fff;
  stroke-width: 0.6;
  stroke-opacity: 0.6;
}

.legend {
  list-style: none;
  margin: 20px 0 0 48px;
  display: grid;
  grid-auto-rows: 92.500px;
  font-family: "Lato", sans-serif;
  font-size: 28.300px;
  line-height: 37px;
  color: #000;
  height: 740px;
}

.legend li {
  display: flex;
  gap: 8px;
}

.legend i {
  flex: none;
  width: 17px;
  height: 17px;
  margin-top: 11px;
}

.legend span {
  width: 380px;
}

.c1 {
  background: #4572a7;
}

.c2 {
  background: #aa4643;
}

.c3 {
  background: #89a54e;
}

.c4 {
  background: #71588f;
}

.c5 {
  background: #4198af;
}

.c6 {
  background: #db843d;
}

.c7 {
  background: #93a9cf;
}

.c8 {
  background: #d19392;
}

/* vertical scrollbar */
.vscroll {
  width: 17px;
  margin-left: 26px;
  display: flex;
  flex-direction: column;
  align-items: center;
  background: #d2d5d9;
}

.ruler-ic {
  margin: 3px 0 3px;
}

.sb-btn {
  width: 16px;
  height: 16px;
  display: flex;
  align-items: center;
  justify-content: center;
  background: linear-gradient(#f7f7f7, #dfe1e4);
  border: 1px solid #8b8e94;
  border-radius: 2px;
}

.thumb {
  width: 14px;
  height: 305px;
  margin-top: 43px;
  display: flex;
  align-items: center;
  justify-content: center;
  background: linear-gradient(90deg, #f5f5f5, #e0e2e5);
  border: 1px solid #9a9da3;
  border-radius: 2px;
}

.thumb i {
  width: 7px;
  height: 7px;
  background: repeating-linear-gradient(#777 0, #777 1px, transparent 1px, transparent 2px);
}

.sb-down {
  margin-top: auto;
}

.browse {
  margin: 4px 0 6px;
}

/* horizontal scrollbar */
.hscroll {
  height: 16px;
  display: flex;
  align-items: center;
  padding: 0 23px 0 6px;
  gap: 6px;
  background: #d2d5d9;
  border-top: 1px solid #9a9da3;
}

.h-track {
  flex: 1;
  height: 100%;
  margin-right: 22px;
  display: flex;
  align-items: center;
  justify-content: center;
  background: linear-gradient(#f4f4f5, #dfe1e4);
  border-left: 1px solid #9a9da3;
  border-right: 1px solid #9a9da3;
}

.h-track i {
  width: 7px;
  height: 7px;
  background: repeating-linear-gradient(90deg, #777 0, #777 1px, transparent 1px, transparent 2px);
}

/* status bar */
.status {
  height: 22px;
  display: flex;
  align-items: center;
  background: linear-gradient(#eceded, #d4d6d9);
  border-top: 1px solid #9a9da3;
  color: #444;
  font-size: 10.500px;
}

.st-cell {
  height: 100%;
  display: flex;
  align-items: center;
  padding: 0 10px 0 8px;
  border-right: 1px solid #b3b5b9;
  white-space: nowrap;
}

.st-lang {
  gap: 17px;
}

.views {
  margin-left: auto;
  height: 100%;
  display: flex;
  align-items: center;
  padding-left: 4px;
  border-left: 1px solid #b3b5b9;
}

.view {
  width: 18px;
  height: 18px;
  display: flex;
  align-items: center;
  justify-content: center;
}

.view-on {
  width: 20px;
  background: linear-gradient(#fde9a8, #fbd26f);
  border: 1px solid #d8ae59;
  border-radius: 2px;
}

.zoom-val {
  margin: 0 8px 0 10px;
  font-size: 11px;
}

.zoom-btn {
  width: 15px;
  height: 15px;
  border-radius: 50%;
  border: 1px solid #7d7f84;
  background: #f5f5f5;
  font: 700 13px/12px "Liberation Sans", sans-serif;
  text-align: center;
  color: #333;
}

.slider {
  position: relative;
  width: 101px;
  height: 1px;
  background: #9a9da3;
}

.slider .mid {
  position: absolute;
  left: 50px;
  top: -3px;
  width: 1px;
  height: 7px;
  background: #9a9da3;
}

.slider .knob {
  position: absolute;
  left: 66px;
  top: -6px;
  width: 9px;
  height: 12px;
  background: #f6f6f6;
  border: 1px solid #7d7f84;
  border-radius: 1px 1px 4px 4px;
}

.status > .zoom-btn:last-child {
  margin-right: 4px;
}

/* taskbar */
.taskbar {
  height: 40px;
  display: flex;
  align-items: center;
  padding-left: 8px;
  border-top: 1px solid #3c3c3c;
  background: linear-gradient(90deg, #a4a4a4, #a8a8a8 1400px, #8a8a8a 1600px, #888 1900px);
}

.orb {
  width: 38px;
  height: 38px;
  flex: none;
  margin-right: 14px;
  display: flex;
  align-items: center;
  justify-content: center;
  border-radius: 50%;
  background: radial-gradient(circle at 50% 30%, #6fb7e6, #1f5f9c 60%, #0f3a68 80%, #39a5c9);
  border: 1px solid #25567f;
}

.task {
  width: 58px;
  height: 38px;
  flex: none;
  margin-right: 4px;
  display: flex;
  align-items: center;
  justify-content: center;
  background: linear-gradient(#c6c6c6, #b4b4b4);
  border: 1px solid #6b6b6b;
  border-bottom: none;
  border-radius: 3px 3px 0 0;
}

.task-word {
  width: 53px;
  margin-right: 9px;
  background: linear-gradient(#d6d6d6, #c6c6c6);
}

.task-plain {
  background: none;
  border-color: transparent;
}

.task-o {
  width: 53px;
  margin-right: 8px;
}

.task-gap {
  width: 58px;
}

.ie-e {
  font: italic 700 30px "Liberation Sans", sans-serif;
  fill: #1f7ac4;
}

.ic-l {
  font: 700 22px "Liberation Sans", sans-serif;
}

.ic-l.w {
  fill: #1c56a8;
}

.ic-l.x {
  fill: #1f7a38;
}

.ic-l.p {
  fill: #c8481c;
}

.ic-l.l {
  fill: #1d6fa8;
}

.ic-l.o {
  fill: #e08c12;
}

.ic-l.pr {
  fill: #4a8a24;
}

.tray {
  margin-left: auto;
  display: flex;
  align-items: center;
  justify-content: space-between;
  width: 392px;
}

.lang {
  color: #eee;
  font-size: 11px;
  margin-top: -6px;
  margin-right: 8px;
}

.clock {
  width: 72px;
  margin-left: 2px;
  color: #f0f0f0;
  font-size: 11px;
  line-height: 17px;
  text-align: center;
  white-space: nowrap;
}

.show-desk {
  width: 14px;
  height: 38px;
  margin-left: 4px;
  flex: none;
  background: linear-gradient(#9d9d9d, #b8b8b8);
  border: 1px solid #6e6e6e;
}
```
